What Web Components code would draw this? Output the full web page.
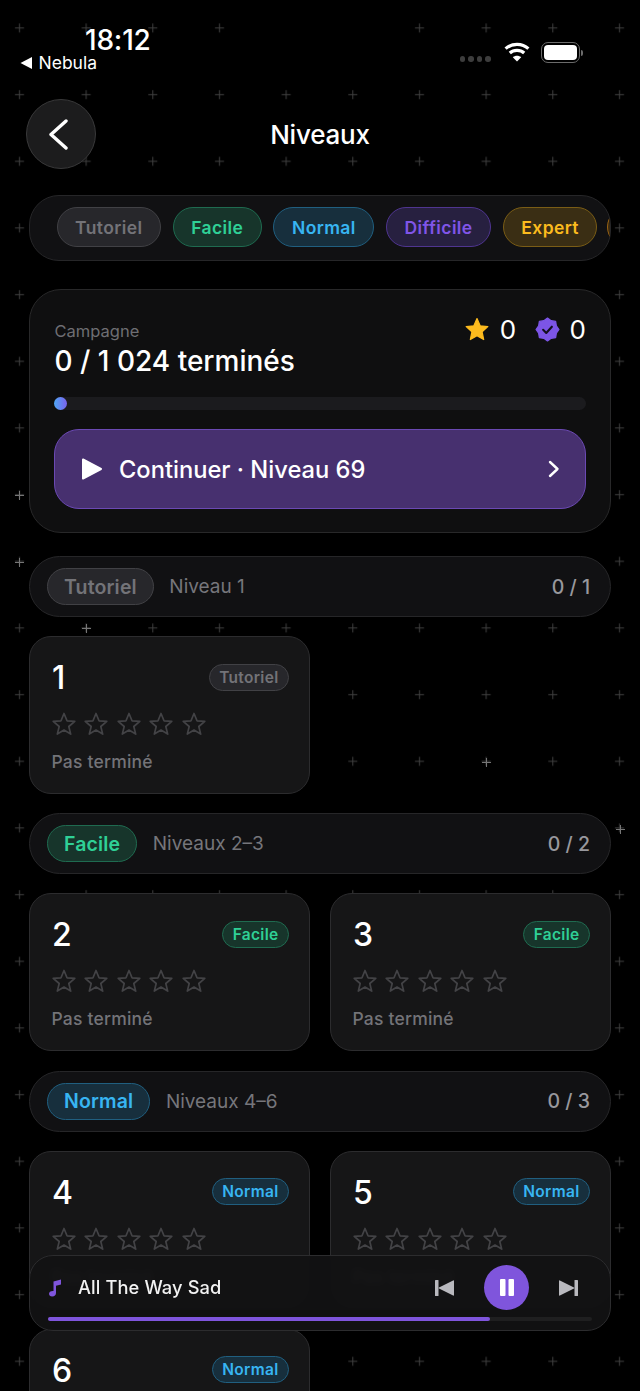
<!DOCTYPE html>
<html lang="fr">
<head>
<meta charset="utf-8">
<title>Niveaux</title>
<style>
  html, body { margin: 0; height: 1391px; overflow: hidden; background: #000; }
  body { font-family: Inter, "Noto Sans", sans-serif; color: #fff; }
</style>
</head>
<body>
<nb-app>
  <nb-status-bar time="18:12" back="Nebula"></nb-status-bar>
  <nb-header title="Niveaux"></nb-header>
  <nb-filter-bar>
    <nb-chip tone="tutoriel">Tutoriel</nb-chip>
    <nb-chip tone="facile">Facile</nb-chip>
    <nb-chip tone="normal">Normal</nb-chip>
    <nb-chip tone="difficile">Difficile</nb-chip>
    <nb-chip tone="expert">Expert</nb-chip>
    <nb-chip tone="next"></nb-chip>
  </nb-filter-bar>
  <nb-campaign></nb-campaign>
  <nb-level-list>
    <nb-section-head tone="tutoriel" name="Tutoriel" range="Niveau 1" count="0 / 1"></nb-section-head>
    <nb-level-grid>
      <nb-level-card number="1" tone="tutoriel" name="Tutoriel"></nb-level-card>
    </nb-level-grid>
    <nb-section-head tone="facile" name="Facile" range="Niveaux 2–3" count="0 / 2"></nb-section-head>
    <nb-level-grid>
      <nb-level-card number="2" tone="facile" name="Facile"></nb-level-card>
      <nb-level-card number="3" tone="facile" name="Facile"></nb-level-card>
    </nb-level-grid>
    <nb-section-head tone="normal" name="Normal" range="Niveaux 4–6" count="0 / 3"></nb-section-head>
    <nb-level-grid>
      <nb-level-card number="4" tone="normal" name="Normal"></nb-level-card>
      <nb-level-card number="5" tone="normal" name="Normal"></nb-level-card>
      <nb-level-card number="6" tone="normal" name="Normal"></nb-level-card>
    </nb-level-grid>
  </nb-level-list>
  <nb-player slot="overlay" track="All The Way Sad"></nb-player>
</nb-app>

<script>
// tone colours shared by chips, badges and section heads
const TONES = `
  :host([tone="tutoriel"]) { --chip-bg: #27272b; --chip-line: #414145; --chip-text: #737378; }
  :host([tone="facile"]) { --chip-bg: #17352b; --chip-line: #1f6b50; --chip-text: #2fd096; }
  :host([tone="normal"]) { --chip-bg: #172f3d; --chip-line: #205f80; --chip-text: #37b5f2; }
  :host([tone="difficile"]) { --chip-bg: #272040; --chip-line: #4f3590; --chip-text: #8055e8; }
  :host([tone="expert"]) { --chip-bg: #3a2e14; --chip-line: #7a5d16; --chip-text: #fbbb1e; }
  :host([tone="next"]) { --chip-bg: #3a2a12; --chip-line: #9a6414; width: 60px; margin-left: -2px; }
`;

class NbApp extends HTMLElement {
  constructor() {
    super();
    this.attachShadow({ mode: 'open' });
  }

  connectedCallback() {
    // plus marks, a few of them catch more light
    const bright = [[19, 495], [19, 562], [620, 829], [86, 628], [486, 762]]
      .map(([x, y]) => `<path d="M${x - 4} ${y + .5}h9M${x + .5} ${y - 4}v9" stroke="#767676"/>`).join('');
    this.shadowRoot.innerHTML = `
      <style>
        :host {
          display: block;
          position: relative;
          height: 1391px;
          overflow: hidden;
          background: #000;
        }
        .sky { position: absolute; inset: 0; width: 640px; height: 1391px; }
        .content { position: relative; }
      </style>
      <svg class="sky" viewBox="0 0 640 1391">
        <defs>
          <pattern id="plus" width="66.667" height="66.667" x="-14" y="-5.6" patternUnits="userSpaceOnUse">
            <path d="M29 33.5h9M33.5 29v9" stroke="#3f3f3f" fill="none"/>
          </pattern>
        </defs>
        <rect width="640" height="1391" fill="url(#plus)"/>
        <rect x="262" y="10" width="120" height="40" fill="#000"/>
        ${bright}
      </svg>
      <div class="content"><slot></slot></div>
      <slot name="overlay"></slot>
    `;
  }
}

class NbStatusBar extends HTMLElement {
  constructor() {
    super();
    this.attachShadow({ mode: 'open' });
  }

  connectedCallback() {
    this.shadowRoot.innerHTML = `
      <style>
        :host {
          display: flex;
          justify-content: space-between;
          height: 99px;
          box-sizing: border-box;
          padding: 24px 57px 0 20px;
        }
        .time {
          margin-left: 65px;
          font-size: 28px;
          line-height: 33px;
          font-weight: 500;
          letter-spacing: -.2px;
        }
        .back {
          display: flex;
          align-items: center;
          gap: 6.500px;
          font-size: 17.500px;
          line-height: 20px;
          margin-top: -4px;
        }
        .right { display: flex; align-items: flex-start; padding-top: 18px; }
        .dots { display: flex; gap: 3px; margin: 14px 13px 0 0; }
        .dots i { width: 5.5px; height: 5.5px; border-radius: 50%; background: #3d3d3d; }
        .bat { display: flex; align-items: center; margin-left: 11.500px; height: 21px; }
        .cell {
          width: 39px;
          height: 21px;
          box-sizing: border-box;
          border: 1.500px solid #6b6b6b;
          border-radius: 7px;
          padding: 2px;
        }
        .cell i { display: block; height: 100%; background: #fff; border-radius: 4px; }
        .tip { width: 2px; height: 6px; margin-left: 1px; background: #6b6b6b; border-radius: 0 2px 2px 0; }
      </style>
      <div class="left">
        <div class="time">${this.getAttribute('time')}</div>
        <div class="back">
          <svg width="12" height="12" viewBox="0 0 12 12"><path d="M12 0v12L.5 6z" fill="#fff"/></svg>
          <span>${this.getAttribute('back')}</span>
        </div>
      </div>
      <div class="right">
        <div class="dots"><i></i><i></i><i></i><i></i></div>
        <svg width="26" height="20" viewBox="0 0 26 20" fill="none" stroke="#fff" stroke-width="3.2">
          <path d="M1.6 6.6C7.8.9 18.200.9 24.400 6.600"/>
          <path d="M5.800 11C9.600 7.500 16.400 7.500 20.200 11"/>
          <path d="M13 19.600l-4.200-4.300c2.400-2 6-2 8.400 0z" fill="#fff" stroke="none"/>
        </svg>
        <div class="bat"><div class="cell"><i></i></div><div class="tip"></div></div>
      </div>
    `;
  }
}

class NbHeader extends HTMLElement {
  constructor() {
    super();
    this.attachShadow({ mode: 'open' });
  }

  connectedCallback() {
    this.shadowRoot.innerHTML = `
      <style>
        :host {
          display: grid;
          grid-template-columns: 70px 1fr 70px;
          align-items: center;
          margin: 0 26px;
          height: 70px;
        }
        .back {
          width: 70px;
          height: 70px;
          box-sizing: border-box;
          border-radius: 50%;
          background: #1c1c1d;
          border: 1.500px solid #39393a;
          display: flex;
          align-items: center;
          justify-content: center;
        }
        h1 {
          margin: 0;
          font-size: 26px;
          font-weight: 500;
          text-align: center;
          letter-spacing: -.2px;
        }
      </style>
      <div class="back">
        <svg width="24" height="34" viewBox="0 0 24 34" fill="none" stroke="#fff" stroke-width="3.400" stroke-linecap="round" stroke-linejoin="round"><path d="M17 4 2 17.500 17 31"/></svg>
      </div>
      <h1>${this.getAttribute('title')}</h1>
      <div></div>
    `;
  }
}

class NbChip extends HTMLElement {
  constructor() {
    super();
    this.attachShadow({ mode: 'open' });
  }

  connectedCallback() {
    this.shadowRoot.innerHTML = `
      <style>
        ${TONES}
        :host {
          display: inline-flex;
          flex: none;
          align-items: center;
          box-sizing: border-box;
          height: var(--chip-height, 40px);
          padding: 0 var(--chip-pad, 17.500px);
          border-radius: 999px;
          background: var(--chip-bg);
          border: 1.500px solid var(--chip-line);
          color: var(--chip-text);
          font-size: var(--chip-size, 17.500px);
          font-weight: 600;
          letter-spacing: var(--chip-track, .4px);
          white-space: nowrap;
        }
      </style>
      <slot></slot>
    `;
  }
}

class NbFilterBar extends HTMLElement {
  constructor() {
    super();
    this.attachShadow({ mode: 'open' });
  }

  connectedCallback() {
    this.shadowRoot.innerHTML = `
      <style>
        :host {
          display: flex;
          gap: 11.700px;
          align-items: center;
          box-sizing: border-box;
          margin: 26px 29px 0;
          height: 66px;
          padding: 0 0 2px 26.500px;
          border-radius: 30px;
          background: #111113;
          border: 1.500px solid #262628;
          overflow: hidden;
        }
      </style>
      <slot></slot>
    `;
  }
}

class NbCampaign extends HTMLElement {
  constructor() {
    super();
    this.attachShadow({ mode: 'open' });
  }

  connectedCallback() {
    this.shadowRoot.innerHTML = `
      <style>
        :host {
          display: block;
          box-sizing: border-box;
          margin: 28px 29px 0;
          height: 244px;
          padding: 29px 24px 0 23.500px;
          border-radius: 32px;
          background: #0f0f10;
          border: 1.500px solid #282829;
        }
        .top { display: flex; justify-content: space-between; align-items: flex-start; padding: 0 0 0 1px; }
        .label { font-size: 16.500px; line-height: 24px; color: #6e6e73; }
        .done { font-size: 28px; line-height: 32px; font-weight: 500; margin-top: 2px; }
        .stats { display: flex; align-items: center; gap: 19px; margin-top: -2px; font-size: 26px; line-height: 24px; }
        .stat { display: flex; align-items: center; gap: 9.500px; }
        .bar { height: 13px; margin-top: 20px; border-radius: 7px; background: #1b1b1e; }
        .bar i {
          display: block;
          width: 13px;
          height: 13px;
          border-radius: 50%;
          background: linear-gradient(90deg, #4fa6f5, #7a63ee);
        }
        .go {
          display: flex;
          align-items: center;
          box-sizing: border-box;
          height: 80px;
          margin-top: 19px;
          padding: 0 24px 0 26px;
          border-radius: 25px;
          background: #47306f;
          border: 1.500px solid #6b49b3;
          font-size: 23.700px;
          font-weight: 500;
        }
        .go span { flex: 1; margin-left: 16.500px; }
      </style>
      <div class="top">
        <div>
          <div class="label">Campagne</div>
          <div class="done">0 / 1 024 terminés</div>
        </div>
        <div class="stats">
          <div class="stat">
            <svg width="26" height="25" viewBox="0 0 24 24"><path d="M12 1.500l3 6.900 7.400.8-5.500 5 1.500 7.400-6.400-3.700-6.400 3.700 1.500-7.400-5.500-5 7.400-.8z" fill="#fdbb1e" stroke="#fdbb1e" stroke-width="1.200" stroke-linejoin="round"/></svg>
            <span>0</span>
          </div>
          <div class="stat">
            <svg width="25" height="25" viewBox="0 0 24 24">
              <polygon points="12,1 15.500,3.500 19.800,4.200 20.500,8.500 23,12 20.500,15.500 19.800,19.800 15.500,20.500 12,23 8.500,20.500 4.200,19.800 3.500,15.500 1,12 3.500,8.500 4.200,4.200 8.500,3.500" fill="#7c55e6" stroke="#7c55e6" stroke-width="1.200" stroke-linejoin="round"/>
              <path d="M7.800 12.300l3 3 5.400-6" fill="none" stroke="#14101f" stroke-width="2" stroke-linecap="round" stroke-linejoin="round"/>
            </svg>
            <span>0</span>
          </div>
        </div>
      </div>
      <div class="bar"><i></i></div>
      <div class="go">
        <svg width="22" height="24" viewBox="0 0 22 24"><path d="M2 2.500 20 12 2 21.500z" fill="#fff" stroke="#fff" stroke-width="2" stroke-linejoin="round"/></svg>
        <span>Continuer · Niveau 69</span>
        <svg width="14" height="20" viewBox="0 0 14 20" fill="none" stroke="#fff" stroke-width="2.400" stroke-linecap="round" stroke-linejoin="round"><path d="M3 3l7.500 7L3 17"/></svg>
      </div>
    `;
  }
}

class NbLevelList extends HTMLElement {
  constructor() {
    super();
    this.attachShadow({ mode: 'open' });
  }

  connectedCallback() {
    this.shadowRoot.innerHTML = `
      <style>
        :host {
          display: flex;
          flex-direction: column;
          gap: 19.150px;
          margin: 23px 29px 0;
        }
      </style>
      <slot></slot>
    `;
  }
}

class NbSectionHead extends HTMLElement {
  constructor() {
    super();
    this.attachShadow({ mode: 'open' });
  }

  connectedCallback() {
    this.shadowRoot.innerHTML = `
      <style>
        :host {
          display: flex;
          align-items: center;
          box-sizing: border-box;
          height: 61px;
          padding: 0 20px 0 17px;
          border-radius: 31px;
          background: #111113;
          border: 1.500px solid #262628;
          font-size: 19px;
          --chip-height: 37px;
          --chip-size: 19.500px;
          --chip-pad: 16px;
          --chip-track: .15px;
        }
        .range { flex: 1; margin-left: 15.500px; color: #76767b; }
        .count { color: #98989d; font-weight: 500; font-size: 19.500px; }
      </style>
      <nb-chip tone="${this.getAttribute('tone')}">${this.getAttribute('name')}</nb-chip>
      <span class="range">${this.getAttribute('range')}</span>
      <span class="count">${this.getAttribute('count')}</span>
    `;
  }
}

class NbLevelGrid extends HTMLElement {
  constructor() {
    super();
    this.attachShadow({ mode: 'open' });
  }

  connectedCallback() {
    this.shadowRoot.innerHTML = `
      <style>
        :host {
          display: grid;
          grid-template-columns: 281px 281px;
          gap: 20px;
        }
      </style>
      <slot></slot>
    `;
  }
}

class NbStars extends HTMLElement {
  constructor() {
    super();
    this.attachShadow({ mode: 'open' });
  }

  connectedCallback() {
    const star = `<svg width="26" height="26" viewBox="0 0 26 26"><path d="M13 2.500l3 7.300 7.800.6-6 5.100 1.900 7.600L13 19.100l-6.700 4 1.900-7.600-6-5.100 7.800-.6z" fill="none" stroke="#434346" stroke-width="1.700" stroke-linejoin="round"/></svg>`;
    this.shadowRoot.innerHTML = `
      <style>
        :host { display: flex; gap: 6.400px; }
        svg { display: block; }
      </style>
      ${star.repeat(5)}
    `;
  }
}

class NbLevelCard extends HTMLElement {
  constructor() {
    super();
    this.attachShadow({ mode: 'open' });
  }

  connectedCallback() {
    this.shadowRoot.innerHTML = `
      <style>
        :host {
          display: block;
          box-sizing: border-box;
          height: 158px;
          padding: 25px 20px 0 22px;
          border-radius: 22px;
          background: #161617;
          border: 1.500px solid #2c2c2e;
          --chip-height: 27px;
          --chip-size: 15.500px;
          --chip-pad: 9.500px;
          --chip-track: .3px;
        }
        .head { display: flex; justify-content: space-between; align-items: center; height: 30px; }
        .num { font-size: 32px; font-weight: 500; line-height: 30px; margin-top: 2px; }
        nb-stars { margin: 19px 0 0 -1px; }
        .state {
          margin-top: 13px;
          margin-left: -.5px;
          font-size: 17.500px;
          line-height: 24px;
          font-weight: 500;
          letter-spacing: .2px;
          color: #737378;
        }
      </style>
      <div class="head">
        <span class="num">${this.getAttribute('number')}</span>
        <nb-chip tone="${this.getAttribute('tone')}">${this.getAttribute('name')}</nb-chip>
      </div>
      <nb-stars></nb-stars>
      <div class="state">Pas terminé</div>
    `;
  }
}

class NbPlayer extends HTMLElement {
  constructor() {
    super();
    this.attachShadow({ mode: 'open' });
  }

  connectedCallback() {
    this.shadowRoot.innerHTML = `
      <style>
        :host {
          display: block;
          position: absolute;
          left: 29px;
          right: 29px;
          top: 1255px;
          height: 76px;
          box-sizing: border-box;
          padding: 9px 18px 0;
          border-radius: 24px;
          background: rgba(18, 18, 19, .94);
          backdrop-filter: blur(3px);
          border: 1.500px solid #2c2c2e;
        }
        .row { display: flex; align-items: center; height: 45px; padding-right: 14px; }
        .name { flex: 1; margin: 0 0 1px 16px; font-size: 18.300px; font-weight: 500; color: #f2f2f2; letter-spacing: .1px; }
        .play {
          width: 45px;
          height: 45px;
          margin: 0 30px;
          border-radius: 50%;
          background: #7f55dc;
          display: flex;
          align-items: center;
          justify-content: center;
        }
        .track { height: 3.500px; margin-top: 7px; background: #1f1f20; border-radius: 2px; }
        .track i { display: block; width: 81.300%; height: 100%; background: #7f55dc; border-radius: 2px; }
      </style>
      <div class="row">
        <svg width="14" height="18" viewBox="0 0 14 18"><path d="M5.500 2.500 13 .5v5l-5 1.300V14c0 2-1.500 3.500-3.800 3.500C2.200 17.500 1 16.300 1 14.800c0-1.800 1.600-3 4.500-2.800z" fill="#7f55dc"/></svg>
        <span class="name">${this.getAttribute('track')}</span>
        <svg width="19" height="16" viewBox="0 0 19 16" fill="#b9b9be"><rect width="3.500" height="16" rx=".6"/><path d="M19 1v14a.6.6 0 0 1-.9.500L4 8.500a.6.6 0 0 1 0-1L18.100.5A.6.6 0 0 1 19 1z"/></svg>
        <div class="play">
          <svg width="14" height="17" viewBox="0 0 14 17" fill="#fff"><rect width="5.500" height="17" rx="1"/><rect x="8.500" width="5.500" height="17" rx="1"/></svg>
        </div>
        <svg width="19" height="16" viewBox="0 0 19 16" fill="#b9b9be"><rect x="15.500" width="3.500" height="16" rx=".6"/><path d="M0 1v14a.6.6 0 0 0 .9.500L15 8.500a.6.6 0 0 0 0-1L.9.500A.6.6 0 0 0 0 1z"/></svg>
      </div>
      <div class="track"><i></i></div>
    `;
  }
}

customElements.define('nb-chip', NbChip);
customElements.define('nb-stars', NbStars);
customElements.define('nb-app', NbApp);
customElements.define('nb-status-bar', NbStatusBar);
customElements.define('nb-header', NbHeader);
customElements.define('nb-filter-bar', NbFilterBar);
customElements.define('nb-campaign', NbCampaign);
customElements.define('nb-level-list', NbLevelList);
customElements.define('nb-section-head', NbSectionHead);
customElements.define('nb-level-grid', NbLevelGrid);
customElements.define('nb-level-card', NbLevelCard);
customElements.define('nb-player', NbPlayer);
</script>
</body>
</html>
